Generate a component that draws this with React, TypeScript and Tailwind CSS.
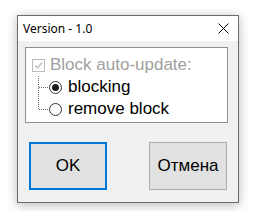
import React from 'react';

const Connector: React.FC<{ last?: boolean }> = ({ last }) => (
  <svg width="11" height="22" viewBox="0 0 11 22" className="shrink-0">
    <line x1="0.5" y1="0" x2="0.5" y2={last ? 11 : 22} stroke="#6d6d6d" strokeDasharray="1 1" />
    <line x1="1" y1="11.5" x2="11" y2="11.5" stroke="#6d6d6d" strokeDasharray="1 1" />
  </svg>
);

const Radio: React.FC<{ checked?: boolean; label: string; last?: boolean }> = ({ checked, label, last }) => (
  <div className="flex h-[22px] items-center">
    <Connector last={last} />
    <span className="flex h-[13px] w-[13px] shrink-0 items-center justify-center rounded-full border border-[#333333] bg-white">
      {checked && <span className="h-[7px] w-[7px] rounded-full bg-[#1a1a1a]" />}
    </span>
    <span className="ml-[6px] text-[17px] leading-[22px] text-black">{label}</span>
  </div>
);

export default function App() {
  return (
    <div
      className="h-[211px] w-[276px] bg-white pl-[17px] pt-[15px]"
      style={{ fontFamily: '"Liberation Sans", Arial, sans-serif' }}
    >
      <div className="flex h-[188px] w-[222px] flex-col border border-[#6b6b6b] bg-[#f0f0f0] shadow-[0_2px_10px_rgba(0,0,0,0.28)]">
        <div className="flex h-[25px] items-center justify-between bg-white pl-[5px] pr-[9px]">
          <span className="text-[12px] text-black" style={{ fontFamily: '"Noto Sans", sans-serif' }}>
            Version - 1.0
          </span>
          <svg width="11" height="11" viewBox="0 0 11 11">
            <path d="M0.5 0.5L10.5 10.5M10.5 0.5L0.5 10.5" stroke="#000" strokeWidth="1" />
          </svg>
        </div>

        <div className="ml-[7px] mt-[6px] flex h-[76px] w-[203px] flex-col border border-[#8e8f8f] bg-white pl-[6px] pt-[6px]">
          <div className="flex h-[22px] items-center">
            <span className="flex h-[13px] w-[13px] shrink-0 items-center justify-center border border-[#bcbcbc] bg-white">
              <svg width="9" height="9" viewBox="0 0 9 9">
                <path d="M1 4.5L3.5 7L8 1.5" fill="none" stroke="#bcbcbc" strokeWidth="1.2" />
              </svg>
            </span>
            <span className="ml-[5px] text-[17px] leading-[22px] text-[#a0a0a0]">Block auto-update:</span>
          </div>
          <div className="ml-[6px] flex flex-col">
            <Radio checked label="blocking" />
            <Radio label="remove block" last />
          </div>
        </div>

        <div className="mt-[19px] flex justify-between pl-[11px] pr-[11px]">
          <button className="h-[48px] w-[78px] border-2 border-[#0078d7] bg-[#e1e1e1] text-[17px] text-black">
            OK
          </button>
          <button className="h-[48px] w-[78px] border border-[#adadad] bg-[#e1e1e1] text-[17px] text-black">
            Отмена
          </button>
        </div>
      </div>
    </div>
  );
}
